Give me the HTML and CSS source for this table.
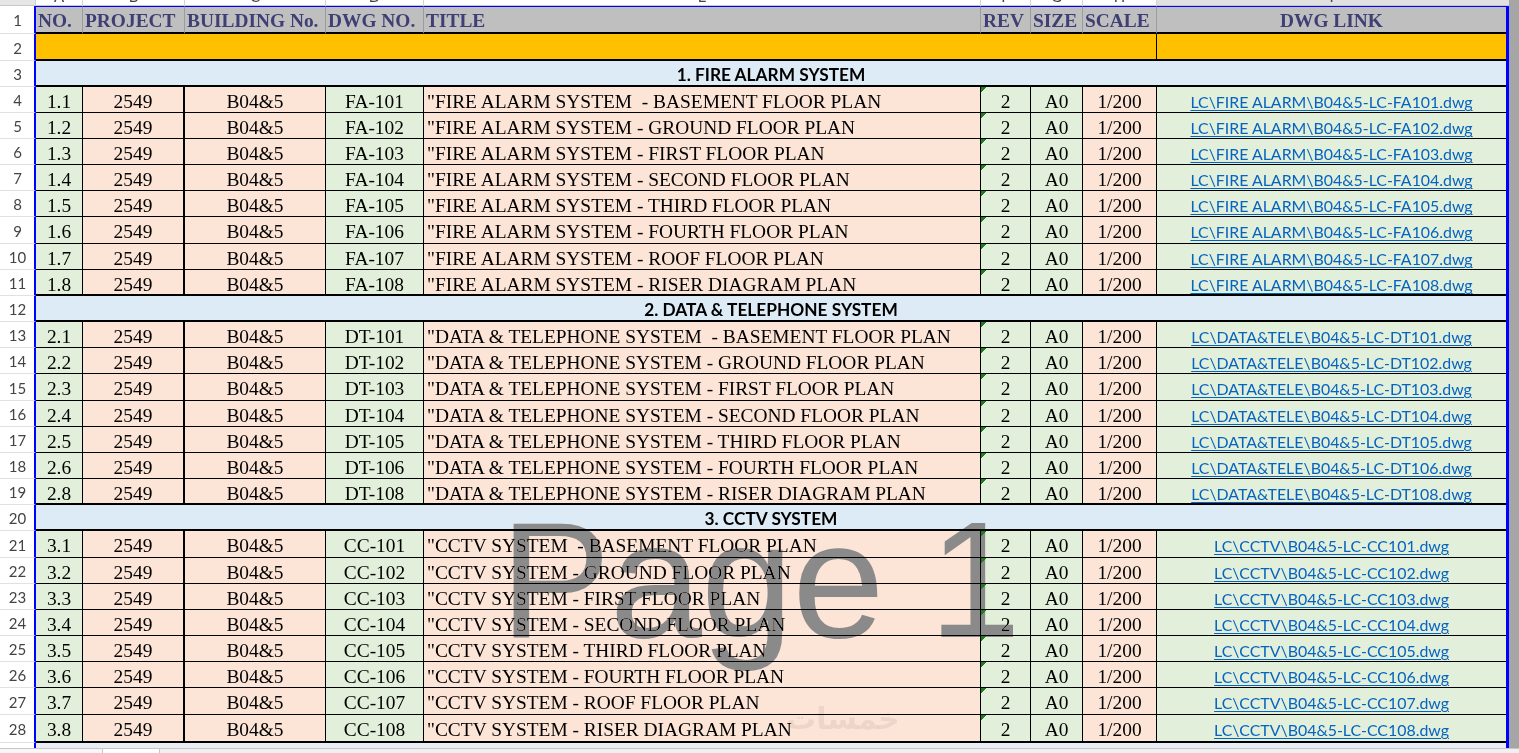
FILE: index.html
```html
<!DOCTYPE html>
<html>
<head>
<meta charset="utf-8">
<title>Drawing list</title>
<link rel="stylesheet" href="styles.css">
</head>
<body>
<div class="sheet">
  <div class="r top">
    <div class="corner"></div>
    <div class="ch"><span>A</span></div><div class="ch"><span>B</span></div><div class="ch"><span>C</span></div><div class="ch"><span>D</span></div><div class="ch"><span>E</span></div><div class="ch"><span>F</span></div><div class="ch"><span>G</span></div><div class="ch"><span>H</span></div><div class="ch chi"><span>I</span></div><div class="ch chi"></div><div class="gu"></div>
  </div>
  <div class="r hdr">
    <div class="rh">1</div>
    <div class="h">NO.</div><div class="h">PROJECT</div><div class="h">BUILDING No.</div><div class="h">DWG NO.</div><div class="h">TITLE</div><div class="h">REV</div><div class="h">SIZE</div><div class="h">SCALE</div><div class="h hc last">DWG LINK</div>
    <div class="bl"></div><div class="gu"></div>
  </div>
  <div class="r t">
    <div class="rh">2</div>
    <div class="y ym"></div><div class="y last"></div>
    <div class="bl"></div><div class="gu"></div>
  </div>
  <div class="r">
    <div class="rh">3</div>
    <div class="s">1. FIRE ALARM SYSTEM</div>
    <div class="bl"></div><div class="gu"></div>
  </div>

  <div class="r"><div class="rh">4</div><div class="c g">1.1</div><div class="c p b2">2549</div><div class="c p">B04&amp;5</div><div class="c g">FA-101</div><div class="c p tt">"FIRE ALARM SYSTEM  - BASEMENT FLOOR PLAN</div><div class="c g rev">2</div><div class="c g">A0</div><div class="c p">1/200</div><div class="c g last"><span class="lk">LC\FIRE ALARM\B04&amp;5-LC-FA101.dwg</span></div><div class="bl"></div><div class="gu"></div></div>
  <div class="r"><div class="rh">5</div><div class="c g">1.2</div><div class="c p b2">2549</div><div class="c p">B04&amp;5</div><div class="c g">FA-102</div><div class="c p tt">"FIRE ALARM SYSTEM - GROUND FLOOR PLAN</div><div class="c g rev">2</div><div class="c g">A0</div><div class="c p">1/200</div><div class="c g last"><span class="lk">LC\FIRE ALARM\B04&amp;5-LC-FA102.dwg</span></div><div class="bl"></div><div class="gu"></div></div>
  <div class="r"><div class="rh">6</div><div class="c g">1.3</div><div class="c p b2">2549</div><div class="c p">B04&amp;5</div><div class="c g">FA-103</div><div class="c p tt">"FIRE ALARM SYSTEM - FIRST FLOOR PLAN</div><div class="c g rev">2</div><div class="c g">A0</div><div class="c p">1/200</div><div class="c g last"><span class="lk">LC\FIRE ALARM\B04&amp;5-LC-FA103.dwg</span></div><div class="bl"></div><div class="gu"></div></div>
  <div class="r"><div class="rh">7</div><div class="c g">1.4</div><div class="c p b2">2549</div><div class="c p">B04&amp;5</div><div class="c g">FA-104</div><div class="c p tt">"FIRE ALARM SYSTEM - SECOND FLOOR PLAN</div><div class="c g rev">2</div><div class="c g">A0</div><div class="c p">1/200</div><div class="c g last"><span class="lk">LC\FIRE ALARM\B04&amp;5-LC-FA104.dwg</span></div><div class="bl"></div><div class="gu"></div></div>
  <div class="r"><div class="rh">8</div><div class="c g">1.5</div><div class="c p b2">2549</div><div class="c p">B04&amp;5</div><div class="c g">FA-105</div><div class="c p tt">"FIRE ALARM SYSTEM - THIRD FLOOR PLAN</div><div class="c g rev">2</div><div class="c g">A0</div><div class="c p">1/200</div><div class="c g last"><span class="lk">LC\FIRE ALARM\B04&amp;5-LC-FA105.dwg</span></div><div class="bl"></div><div class="gu"></div></div>
  <div class="r t"><div class="rh">9</div><div class="c g">1.6</div><div class="c p b2">2549</div><div class="c p">B04&amp;5</div><div class="c g">FA-106</div><div class="c p tt">"FIRE ALARM SYSTEM - FOURTH FLOOR PLAN</div><div class="c g rev">2</div><div class="c g">A0</div><div class="c p">1/200</div><div class="c g last"><span class="lk">LC\FIRE ALARM\B04&amp;5-LC-FA106.dwg</span></div><div class="bl"></div><div class="gu"></div></div>
  <div class="r"><div class="rh">10</div><div class="c g">1.7</div><div class="c p b2">2549</div><div class="c p">B04&amp;5</div><div class="c g">FA-107</div><div class="c p tt">"FIRE ALARM SYSTEM - ROOF FLOOR PLAN</div><div class="c g rev">2</div><div class="c g">A0</div><div class="c p">1/200</div><div class="c g last"><span class="lk">LC\FIRE ALARM\B04&amp;5-LC-FA107.dwg</span></div><div class="bl"></div><div class="gu"></div></div>
  <div class="r k"><div class="rh">11</div><div class="c g">1.8</div><div class="c p b2">2549</div><div class="c p">B04&amp;5</div><div class="c g">FA-108</div><div class="c p tt">"FIRE ALARM SYSTEM - RISER DIAGRAM PLAN</div><div class="c g rev">2</div><div class="c g">A0</div><div class="c p">1/200</div><div class="c g last"><span class="lk">LC\FIRE ALARM\B04&amp;5-LC-FA108.dwg</span></div><div class="bl"></div><div class="gu"></div></div>

  <div class="r"><div class="rh">12</div><div class="s">2. DATA &amp; TELEPHONE SYSTEM</div><div class="bl"></div><div class="gu"></div></div>

  <div class="r"><div class="rh">13</div><div class="c g">2.1</div><div class="c p b2">2549</div><div class="c p">B04&amp;5</div><div class="c g">DT-101</div><div class="c p tt">"DATA &amp; TELEPHONE SYSTEM  - BASEMENT FLOOR PLAN</div><div class="c g rev">2</div><div class="c g">A0</div><div class="c p">1/200</div><div class="c g last"><span class="lk">LC\DATA&amp;TELE\B04&amp;5-LC-DT101.dwg</span></div><div class="bl"></div><div class="gu"></div></div>
  <div class="r"><div class="rh">14</div><div class="c g">2.2</div><div class="c p b2">2549</div><div class="c p">B04&amp;5</div><div class="c g">DT-102</div><div class="c p tt">"DATA &amp; TELEPHONE SYSTEM - GROUND FLOOR PLAN</div><div class="c g rev">2</div><div class="c g">A0</div><div class="c p">1/200</div><div class="c g last"><span class="lk">LC\DATA&amp;TELE\B04&amp;5-LC-DT102.dwg</span></div><div class="bl"></div><div class="gu"></div></div>
  <div class="r t"><div class="rh">15</div><div class="c g">2.3</div><div class="c p b2">2549</div><div class="c p">B04&amp;5</div><div class="c g">DT-103</div><div class="c p tt">"DATA &amp; TELEPHONE SYSTEM - FIRST FLOOR PLAN</div><div class="c g rev">2</div><div class="c g">A0</div><div class="c p">1/200</div><div class="c g last"><span class="lk">LC\DATA&amp;TELE\B04&amp;5-LC-DT103.dwg</span></div><div class="bl"></div><div class="gu"></div></div>
  <div class="r"><div class="rh">16</div><div class="c g">2.4</div><div class="c p b2">2549</div><div class="c p">B04&amp;5</div><div class="c g">DT-104</div><div class="c p tt">"DATA &amp; TELEPHONE SYSTEM - SECOND FLOOR PLAN</div><div class="c g rev">2</div><div class="c g">A0</div><div class="c p">1/200</div><div class="c g last"><span class="lk">LC\DATA&amp;TELE\B04&amp;5-LC-DT104.dwg</span></div><div class="bl"></div><div class="gu"></div></div>
  <div class="r"><div class="rh">17</div><div class="c g">2.5</div><div class="c p b2">2549</div><div class="c p">B04&amp;5</div><div class="c g">DT-105</div><div class="c p tt">"DATA &amp; TELEPHONE SYSTEM - THIRD FLOOR PLAN</div><div class="c g rev">2</div><div class="c g">A0</div><div class="c p">1/200</div><div class="c g last"><span class="lk">LC\DATA&amp;TELE\B04&amp;5-LC-DT105.dwg</span></div><div class="bl"></div><div class="gu"></div></div>
  <div class="r"><div class="rh">18</div><div class="c g">2.6</div><div class="c p b2">2549</div><div class="c p">B04&amp;5</div><div class="c g">DT-106</div><div class="c p tt">"DATA &amp; TELEPHONE SYSTEM - FOURTH FLOOR PLAN</div><div class="c g rev">2</div><div class="c g">A0</div><div class="c p">1/200</div><div class="c g last"><span class="lk">LC\DATA&amp;TELE\B04&amp;5-LC-DT106.dwg</span></div><div class="bl"></div><div class="gu"></div></div>
  <div class="r k"><div class="rh">19</div><div class="c g">2.8</div><div class="c p b2">2549</div><div class="c p">B04&amp;5</div><div class="c g">DT-108</div><div class="c p tt">"DATA &amp; TELEPHONE SYSTEM - RISER DIAGRAM PLAN</div><div class="c g rev">2</div><div class="c g">A0</div><div class="c p">1/200</div><div class="c g last"><span class="lk">LC\DATA&amp;TELE\B04&amp;5-LC-DT108.dwg</span></div><div class="bl"></div><div class="gu"></div></div>

  <div class="r"><div class="rh">20</div><div class="s">3. CCTV SYSTEM</div><div class="bl"></div><div class="gu"></div></div>

  <div class="r t"><div class="rh">21</div><div class="c g">3.1</div><div class="c p b2">2549</div><div class="c p">B04&amp;5</div><div class="c g">CC-101</div><div class="c p tt">"CCTV SYSTEM  - BASEMENT FLOOR PLAN</div><div class="c g rev">2</div><div class="c g">A0</div><div class="c p">1/200</div><div class="c g last"><span class="lk">LC\CCTV\B04&amp;5-LC-CC101.dwg</span></div><div class="bl"></div><div class="gu"></div></div>
  <div class="r"><div class="rh">22</div><div class="c g">3.2</div><div class="c p b2">2549</div><div class="c p">B04&amp;5</div><div class="c g">CC-102</div><div class="c p tt">"CCTV SYSTEM - GROUND FLOOR PLAN</div><div class="c g rev">2</div><div class="c g">A0</div><div class="c p">1/200</div><div class="c g last"><span class="lk">LC\CCTV\B04&amp;5-LC-CC102.dwg</span></div><div class="bl"></div><div class="gu"></div></div>
  <div class="r"><div class="rh">23</div><div class="c g">3.3</div><div class="c p b2">2549</div><div class="c p">B04&amp;5</div><div class="c g">CC-103</div><div class="c p tt">"CCTV SYSTEM - FIRST FLOOR PLAN</div><div class="c g rev">2</div><div class="c g">A0</div><div class="c p">1/200</div><div class="c g last"><span class="lk">LC\CCTV\B04&amp;5-LC-CC103.dwg</span></div><div class="bl"></div><div class="gu"></div></div>
  <div class="r"><div class="rh">24</div><div class="c g">3.4</div><div class="c p b2">2549</div><div class="c p">B04&amp;5</div><div class="c g">CC-104</div><div class="c p tt">"CCTV SYSTEM - SECOND FLOOR PLAN</div><div class="c g rev">2</div><div class="c g">A0</div><div class="c p">1/200</div><div class="c g last"><span class="lk">LC\CCTV\B04&amp;5-LC-CC104.dwg</span></div><div class="bl"></div><div class="gu"></div></div>
  <div class="r"><div class="rh">25</div><div class="c g">3.5</div><div class="c p b2">2549</div><div class="c p">B04&amp;5</div><div class="c g">CC-105</div><div class="c p tt">"CCTV SYSTEM - THIRD FLOOR PLAN</div><div class="c g rev">2</div><div class="c g">A0</div><div class="c p">1/200</div><div class="c g last"><span class="lk">LC\CCTV\B04&amp;5-LC-CC105.dwg</span></div><div class="bl"></div><div class="gu"></div></div>
  <div class="r"><div class="rh">26</div><div class="c g">3.6</div><div class="c p b2">2549</div><div class="c p">B04&amp;5</div><div class="c g">CC-106</div><div class="c p tt">"CCTV SYSTEM - FOURTH FLOOR PLAN</div><div class="c g rev">2</div><div class="c g">A0</div><div class="c p">1/200</div><div class="c g last"><span class="lk">LC\CCTV\B04&amp;5-LC-CC106.dwg</span></div><div class="bl"></div><div class="gu"></div></div>
  <div class="r t"><div class="rh">27</div><div class="c g">3.7</div><div class="c p b2">2549</div><div class="c p">B04&amp;5</div><div class="c g">CC-107</div><div class="c p tt">"CCTV SYSTEM - ROOF FLOOR PLAN</div><div class="c g rev">2</div><div class="c g">A0</div><div class="c p">1/200</div><div class="c g last"><span class="lk">LC\CCTV\B04&amp;5-LC-CC107.dwg</span></div><div class="bl"></div><div class="gu"></div></div>
  <div class="r k t2"><div class="rh">28</div><div class="c g">3.8</div><div class="c p b2">2549</div><div class="c p">B04&amp;5</div><div class="c g">CC-108</div><div class="c p tt">"CCTV SYSTEM - RISER DIAGRAM PLAN</div><div class="c g rev">2</div><div class="c g">A0</div><div class="c p">1/200</div><div class="c g last"><span class="lk">LC\CCTV\B04&amp;5-LC-CC108.dwg</span></div><div class="bl"></div><div class="gu"></div></div>

  <div class="r tail">
    <div class="rh"></div><div class="tl"></div><div class="bl"></div><div class="gu"></div>
  </div>
  <div class="tabs">
    <div class="tab t1"></div><div class="tab t2a"></div><div class="tab t3"></div>
  </div>

  <div class="wm">Page 1</div>
  <div class="wm2">خمسات</div>
</div>
</body>
</html>
```

FILE: styles.css
```css
* { box-sizing: border-box; }
html, body { margin: 0; padding: 0; }
body {
  width: 1519px;
  height: 753px;
  overflow: hidden;
  background: #ffffff;
  font-family: "Liberation Serif", "Times New Roman", serif;
}
.sheet { position: relative; width: 1519px; height: 753px; }

.r {
  display: grid;
  grid-template-columns: 36px 47px 102px 141px 98px 557px 50px 52px 74px 349px 3px 10px;
  height: 26px;
}
.r.t { height: 27px; }
.r.t2 { height: 28px; }

/* column letter strip */
.r.top { height: 6px; overflow: hidden; }
.corner { background: #e6e6e6; border-right: 1px solid #d0d0d0; border-bottom: 1px solid #c8c8c8; }
.ch {
  background: #ffffff;
  border-right: 1px solid #d4d4d4;
  border-bottom: 1px solid #c8c8c8;
  overflow: hidden;
  text-align: center;
}
.ch span {
  display: block;
  font-family: Lato, "Noto Sans", sans-serif;
  font-size: 15px;
  line-height: 15px;
  margin-top: -11px;
  color: #444444;
}
.ch.chi { background: #e1e1e1; border-right: none; }

/* row numbers */
.rh {
  background: #ffffff;
  border-right: 2px solid #0000ff;
  border-bottom: 1px solid #e1e1e1;
  display: flex;
  align-items: center;
  justify-content: center;
  font-family: Lato, "Noto Sans", sans-serif;
  font-size: 15px;
  color: #444444;
  padding: 1px 0 0 1px;
}
.bl { background: #0000ff; }
.gu { background: #a6a6a6; }

/* header row */
.r.hdr { height: 28px; }
.h {
  background: #bfbfbf;
  border-top: 1px solid #0000ff;
  border-right: 1px solid #9c9c9c;
  border-bottom: 2px solid #000000;
  color: #3f3f76;
  font-weight: bold;
  font-size: 19.4px;
  line-height: 24px;
  padding: 2px 0 0 2px;
  white-space: nowrap;
  overflow: hidden;
}
.h.hc { text-align: center; padding-left: 0; }
.last { border-right: none !important; }

/* yellow row */
.y {
  background: #ffc000;
  border-bottom: 2px solid #000000;
}
.ym { grid-column: span 8; border-right: 1px solid #000000; }

/* section rows */
.s {
  grid-column: span 9;
  background: #ddebf7;
  border-bottom: 2px solid #000000;
  text-align: center;
  font-family: Lato, "Noto Sans", sans-serif;
  font-weight: bold;
  font-size: 17.3px;
  line-height: 21px;
  padding: 3px 0 0 0;
  color: #000000;
  white-space: nowrap;
  overflow: hidden;
}

/* data cells */
.c {
  border-right: 1px solid #000000;
  border-bottom: 1px solid #000000;
  white-space: pre;
  overflow: hidden;
  text-align: center;
  font-size: 19.4px;
  line-height: 24px;
  padding-top: 3px;
  color: #000000;
}
.r.k .c { border-bottom-width: 2px; }
.c.b2 { border-right-width: 2px; }
.g { background: #e2efda; }
.p { background: #fce4d6; }
.tt { text-align: left; padding-left: 3px; }
.rev {
  background: linear-gradient(135deg, #1e7b1e 0 4px, rgba(0,0,0,0) 4px), #e2efda;
}
.lk {
  font-family: Lato, "Noto Sans", sans-serif;
  font-size: 15.9px;
  color: #0563c1;
  text-decoration: underline;
  text-decoration-thickness: 1px;
  text-underline-offset: 2px;
}

/* bottom partial row + tabs */
.r.tail { height: 5px; }
.tail .rh { border-bottom: none; }
.tl { grid-column: span 9; background: #e9eef6; }
.tabs {
  display: flex;
  height: 5px;
  border-top: 1px solid #c6c6c6;
  background: #f0f0f0;
}
.tab { height: 100%; }
.t1 { width: 103px; background: #f7f7f7; border-right: 1px solid #c6c6c6; }
.t2a { width: 57px; background: #ffffff; border-right: 1px solid #c6c6c6; }
.t3 { flex: 1; background: #f0f0f0; }

/* page watermark overlays */
.wm {
  position: absolute;
  left: 500px;
  top: 497px;
  font-family: "Liberation Sans", Arial, sans-serif;
  font-size: 166px;
  letter-spacing: -1px;
  line-height: 1;
  color: #8a8a8a;
  mix-blend-mode: darken;
  white-space: nowrap;
  pointer-events: none;
}
.wm2 {
  position: absolute;
  left: 786px;
  top: 704px;
  font-family: "DejaVu Sans", sans-serif;
  font-weight: bold;
  font-size: 30px;
  line-height: 1;
  color: rgba(0, 0, 0, 0.06);
  white-space: nowrap;
  pointer-events: none;
}
```
